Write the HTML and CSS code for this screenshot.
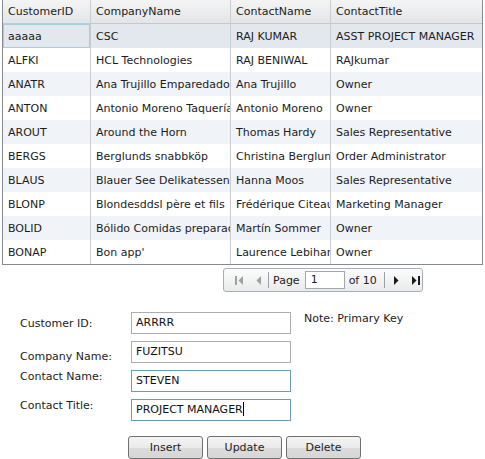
FILE: index.html
```html
<!DOCTYPE html>
<html lang="en">
<head>
  <meta charset="UTF-8">
  <title>Customers</title>
  <link rel="stylesheet" href="styles.css">
</head>
<body>
  <div class="grid-wrap">
    <table class="grid">
      <thead>
        <tr>
          <th class="c1">CustomerID</th>
          <th class="c2">CompanyName</th>
          <th class="c3">ContactName</th>
          <th class="c4">ContactTitle</th>
        </tr>
      </thead>
      <tbody>
        <tr class="selected"><td class="focus">aaaaa</td><td>CSC</td><td>RAJ KUMAR</td><td>ASST PROJECT MANAGER</td></tr>
        <tr><td>ALFKI</td><td>HCL Technologies</td><td>RAJ BENIWAL</td><td>RAJkumar</td></tr>
        <tr class="alt"><td>ANATR</td><td>Ana Trujillo Emparedados y helados</td><td>Ana Trujillo</td><td>Owner</td></tr>
        <tr><td>ANTON</td><td>Antonio Moreno Taquería</td><td>Antonio Moreno</td><td>Owner</td></tr>
        <tr class="alt"><td>AROUT</td><td>Around the Horn</td><td>Thomas Hardy</td><td>Sales Representative</td></tr>
        <tr><td>BERGS</td><td>Berglunds snabbköp</td><td>Christina Berglund</td><td>Order Administrator</td></tr>
        <tr class="alt"><td>BLAUS</td><td>Blauer See Delikatessen</td><td>Hanna Moos</td><td>Sales Representative</td></tr>
        <tr><td>BLONP</td><td>Blondesddsl père et fils</td><td>Frédérique Citeaux</td><td>Marketing Manager</td></tr>
        <tr class="alt"><td>BOLID</td><td>Bólido Comidas preparadas</td><td>Martín Sommer</td><td>Owner</td></tr>
        <tr><td>BONAP</td><td>Bon app'</td><td>Laurence Lebihan</td><td>Owner</td></tr>
      </tbody>
    </table>
  </div>

  <div class="pager">
    <span class="pg-btn off">
      <svg width="8" height="9" viewBox="0 0 8 9"><rect x="0" y="0" width="2" height="9"/><path d="M8 0 L3.5 4.5 L8 9 Z"/></svg>
    </span>
    <span class="pg-btn off">
      <svg width="5" height="9" viewBox="0 0 5 9"><path d="M5 0 L0.5 4.5 L5 9 Z"/></svg>
    </span>
    <span class="pg-sep"></span>
    <span class="pg-text">Page</span>
    <span class="pg-box">1</span>
    <span class="pg-text">of 10</span>
    <span class="pg-sep"></span>
    <span class="pg-btn">
      <svg width="5" height="9" viewBox="0 0 5 9"><path d="M0 0 L4.5 4.5 L0 9 Z"/></svg>
    </span>
    <span class="pg-btn">
      <svg width="8" height="9" viewBox="0 0 8 9"><path d="M0 0 L4.5 4.5 L0 9 Z"/><rect x="6" y="0" width="2" height="9"/></svg>
    </span>
  </div>

  <div class="form">
    <label class="lbl l1">Customer ID:</label>
    <div class="field">ARRRR</div>
    <div class="note">Note: Primary Key</div>

    <label class="lbl l2">Company Name:</label>
    <div class="field">FUZITSU</div>
    <div></div>

    <label class="lbl l3">Contact Name:</label>
    <div class="field active">STEVEN</div>
    <div></div>

    <label class="lbl l4">Contact Title:</label>
    <div class="field active">PROJECT MANAGER<span class="caret"></span></div>
    <div></div>
  </div>

  <div class="actions">
    <button class="btn">Insert</button>
    <button class="btn">Update</button>
    <button class="btn">Delete</button>
  </div>
</body>
</html>
```

FILE: styles.css
```css
body {
  margin: 0;
  font-family: "DejaVu Sans", Verdana, sans-serif;
  font-size: 11px;
  color: #1c1c1c;
  background: #fff;
}
.grid-wrap {
  margin-left: 2px;
  width: 479px;
  border: 1px solid #868b92;
  border-top: none;
}
.grid {
  width: 479px;
  table-layout: fixed;
  border-collapse: separate;
  border-spacing: 0;
}
.grid th,
.grid td {
  box-sizing: border-box;
  padding: 0 4px 0 5px;
  text-align: left;
  font-weight: normal;
  white-space: nowrap;
  overflow: hidden;
  border-right: 1px solid #c9cdd2;
}
.grid th:last-child,
.grid td:last-child {
  border-right: none;
}
.grid th {
  height: 24px;
  color: #222;
  background: linear-gradient(#f4f4f4, #e3e5e7);
  border-bottom: 1px solid #c4c8cc;
}
.c1 { width: 88px; }
.c2 { width: 140px; }
.c3 { width: 100px; }
.c4 { width: 151px; }
.grid td {
  height: 24px;
}
.grid tr.alt td {
  background: #f0f3f7;
}
.grid tr.selected td {
  background: #e3e8ee;
}
.grid td.focus {
  box-shadow: inset 0 0 0 1px #9fd2de;
}
.pager {
  margin: 3px 0 0 223px;
  width: 198px;
  height: 22px;
  border: 1px solid #a9aeb5;
  border-radius: 3px;
  background: linear-gradient(#fcfcfc, #e9eaeb);
  display: flex;
  align-items: center;
}
.pg-btn {
  display: flex;
  align-items: center;
  fill: #1a1a1a;
}
.pg-btn.off {
  fill: #a0a0a0;
}
.pg-btn:nth-child(1) { margin-left: 11px; }
.pg-btn:nth-child(2) { margin-left: 12px; }
.pg-sep {
  width: 1px;
  height: 16px;
  background: #9ba0a6;
  margin: 0 4px 0 7px;
}
.pg-sep + .pg-btn { margin-left: 5px; }
.pg-btn + .pg-btn { margin-left: 13px; }
.pg-text {
  color: #222;
}
.pg-box {
  box-sizing: border-box;
  width: 40px;
  height: 18px;
  margin: 0 4px 0 5px;
  padding-left: 5px;
  border: 1px solid #a3a8ae;
  background: #fff;
  line-height: 16px;
}
.form {
  margin: 20px 0 0 20px;
  display: grid;
  grid-template-columns: 111px 160px auto;
  grid-template-rows: repeat(4, 22px);
  row-gap: 7px;
  column-gap: 0;
}
.lbl {
  color: #1c1c1c;
}
.l1 { align-self: center; }
.l2 { align-self: end; }
.l3 { align-self: start; padding-top: 0; }
.l4 { align-self: start; }
.field {
  box-sizing: border-box;
  height: 22px;
  border: 1px solid #aaadb2;
  padding: 0 4px;
  line-height: 20px;
  background: #fff;
  color: #111;
  white-space: nowrap;
}
.field.active {
  border-color: #6b9db5;
}
.caret {
  display: inline-block;
  width: 1px;
  height: 14px;
  background: #000;
  vertical-align: -3px;
}
.note {
  margin-left: 13px;
  align-self: start;
}
.actions {
  margin: 15px 0 0 128px;
  display: flex;
  gap: 4px;
}
.btn {
  width: 75px;
  height: 23px;
  font-family: inherit;
  font-size: 11px;
  color: #1c1c1c;
  border: 1px solid #707070;
  border-radius: 3px;
  background: linear-gradient(#f4f4f4 0%, #eaeaea 50%, #dcdcdc 51%, #d6d6d6 100%);
  padding: 0;
}
```
